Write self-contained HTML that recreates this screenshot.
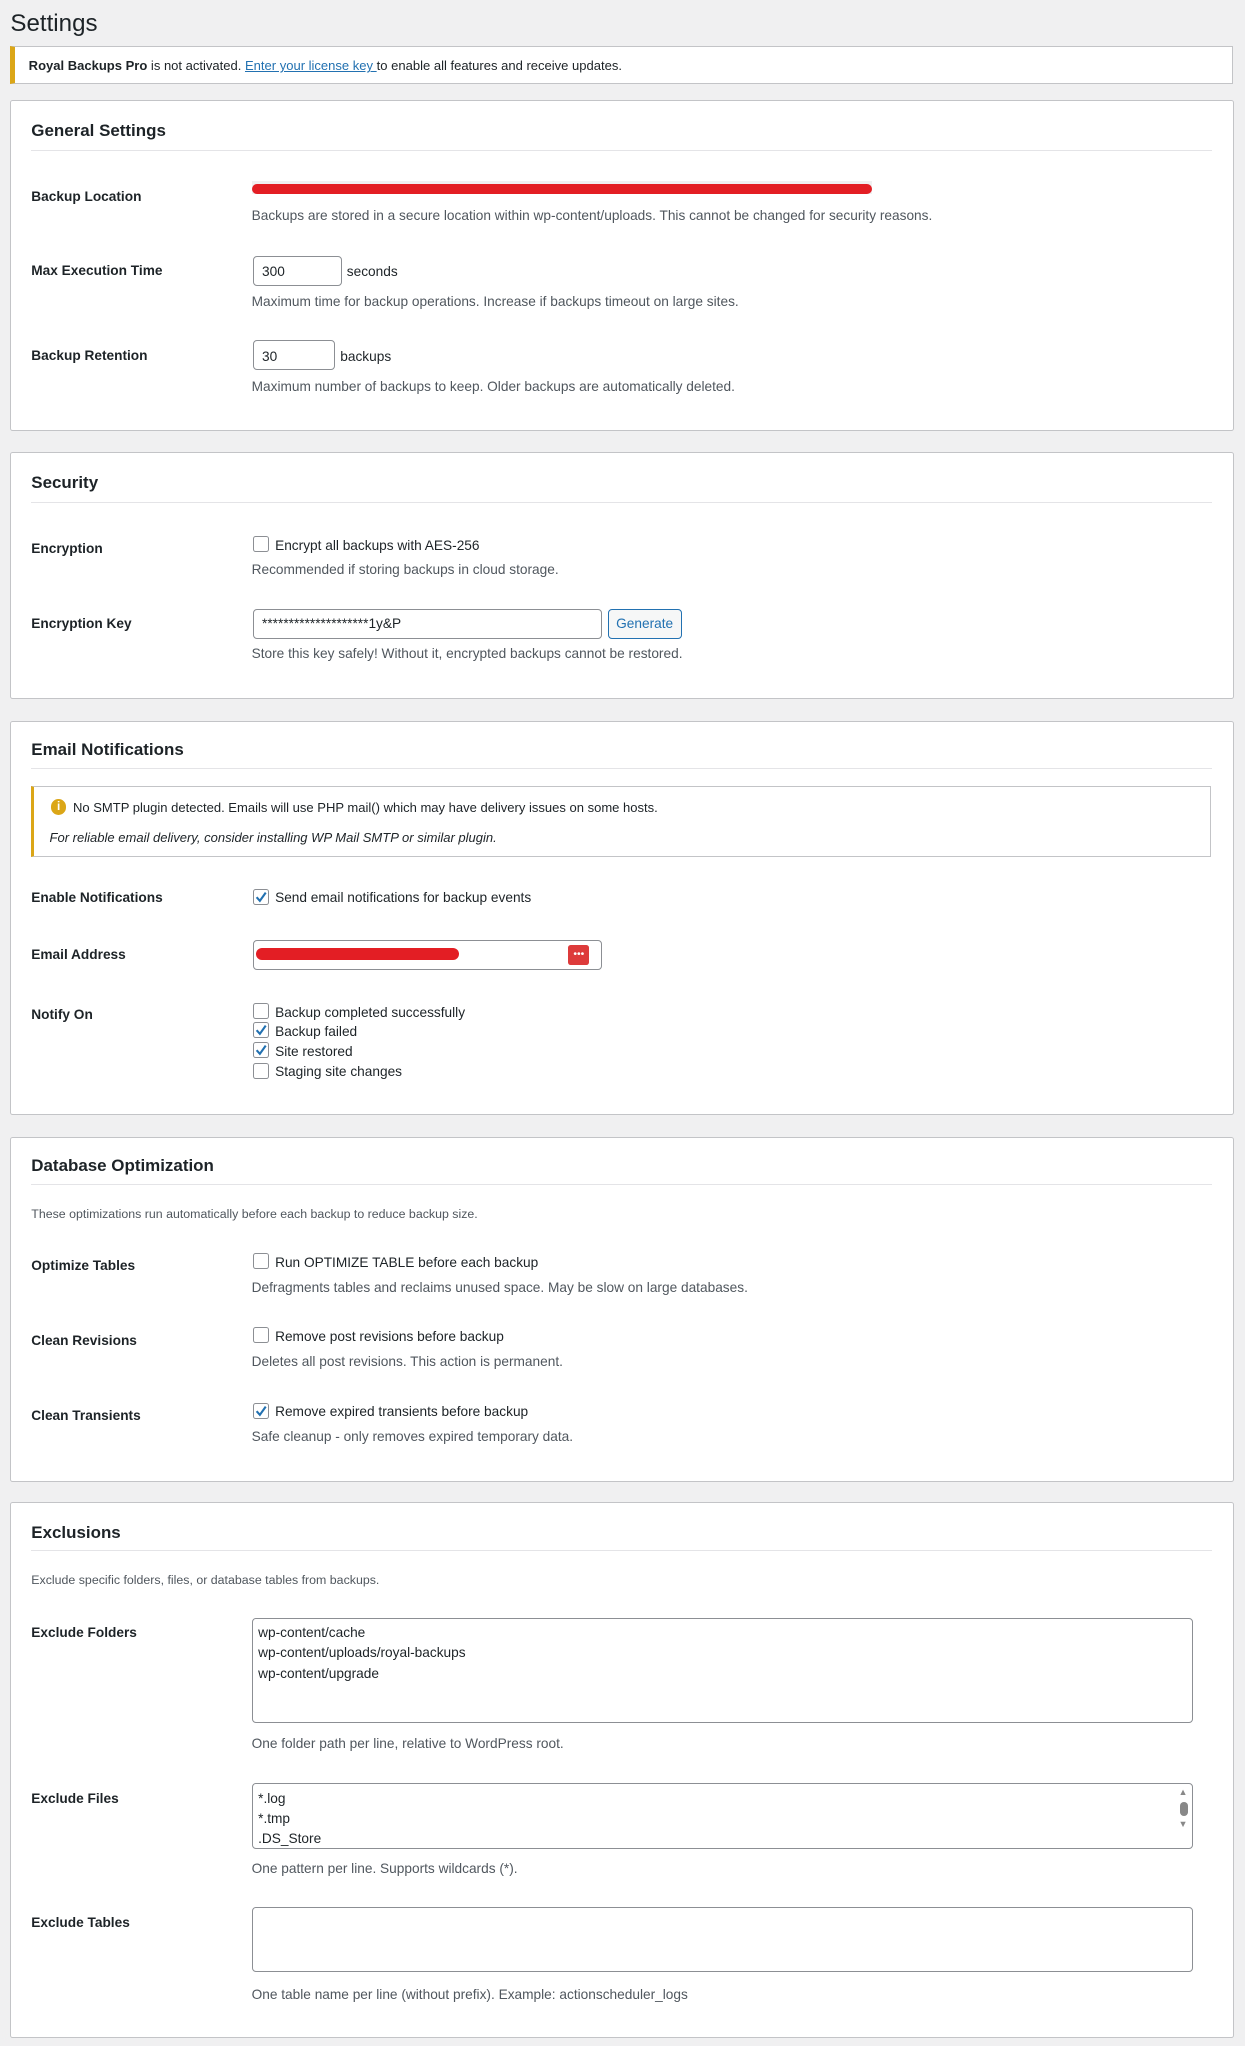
<!DOCTYPE html>
<html><head><meta charset="utf-8"><style>
html,body{margin:0;padding:0;background:#f0f0f1;}
body{width:1245px;height:2045px;overflow:hidden;}
#w{zoom:1.3037;position:relative;width:955px;height:1569px;font-family:"Liberation Sans",sans-serif;font-size:10.5px;color:#1d2327;}
#w div{position:absolute;}
.t{line-height:14px;white-space:nowrap;margin-top:1px;}
.card{background:#fff;border:1px solid #c3c4c7;border-radius:2px;left:8px;width:937px;}
.h{left:24px;font-size:13px;font-weight:bold;color:#1d2327;line-height:16px;}
.hr{left:24px;width:906px;height:1px;background:#e4e4e7;}
.lbl{left:24px;font-weight:bold;}
.d{left:193px;color:#50575e;}
.in{border:1px solid #8c8f94;border-radius:3px;background:#fff;box-sizing:border-box;}
.cb{width:11px;height:11px;border:1px solid #8c8f94;border-radius:2px;background:#fff;left:194px;}
.cb svg{position:absolute;left:0;top:0;}
.ck{left:211px;}
</style></head><body><div id="w">
<div class="t" style="left:8px;top:5px;font-size:18.5px;line-height:24px;">Settings</div>
<div style="left:8px;top:35px;height:28px;background:#fff;border:1px solid #c3c4c7;border-left:4px solid #dba617;width:933px;"></div>
<div class="t" style="left:22px;top:43px;font-size:10px;"><b style="font-weight:600">Royal Backups Pro</b> is not activated. <span style="color:#2271b1;text-decoration:underline">Enter your license key </span>to enable all features and receive updates.</div>

<!-- card 1 -->
<div class="card" style="top:77px;height:252px;"></div>
<div class="h t" style="top:92px;">General Settings</div>
<div class="hr" style="top:115px;"></div>
<div class="lbl t" style="top:143px;">Backup Location</div>
<div style="left:193px;top:139px;width:476px;height:10px;background:#f0f0f1;"></div>
<div style="left:193px;top:141px;width:476px;height:8px;background:#e31e24;border-radius:5px;"></div>
<div class="d t" style="top:158px;">Backups are stored in a secure location within wp-content/uploads. This cannot be changed for security reasons.</div>
<div class="lbl t" style="top:200px;">Max Execution Time</div>
<div class="in" style="left:194px;top:196px;width:68px;height:23px;"></div>
<div class="t" style="left:201px;top:201px;">300</div>
<div class="t" style="left:266px;top:201px;">seconds</div>
<div class="d t" style="top:224px;">Maximum time for backup operations. Increase if backups timeout on large sites.</div>
<div class="lbl t" style="top:265px;">Backup Retention</div>
<div class="in" style="left:194px;top:261px;width:63px;height:23px;"></div>
<div class="t" style="left:201px;top:266px;">30</div>
<div class="t" style="left:261px;top:266px;">backups</div>
<div class="d t" style="top:289px;">Maximum number of backups to keep. Older backups are automatically deleted.</div>

<!-- card 2 -->
<div class="card" style="top:347px;height:188px;"></div>
<div class="h t" style="top:362px;">Security</div>
<div class="hr" style="top:385px;"></div>
<div class="lbl t" style="top:413px;">Encryption</div>
<div class="cb" style="top:411px;"></div>
<div class="t ck" style="top:411px;">Encrypt all backups with AES-256</div>
<div class="d t" style="top:429px;">Recommended if storing backups in cloud storage.</div>
<div class="lbl t" style="top:471px;">Encryption Key</div>
<div class="in" style="left:194px;top:467px;width:268px;height:23px;"></div>
<div class="t" style="left:201px;top:471px;">********************1y&amp;P</div>
<div style="left:466px;top:467px;width:57px;height:23px;border:1px solid #2271b1;border-radius:3px;background:#f6f7f7;box-sizing:border-box;color:#2271b1;text-align:center;line-height:21px;">Generate</div>
<div class="d t" style="top:494px;">Store this key safely! Without it, encrypted backups cannot be restored.</div>

<!-- card 3 -->
<div class="card" style="top:553px;height:301px;"></div>
<div class="h t" style="top:567px;">Email Notifications</div>
<div class="hr" style="top:589px;"></div>
<div style="left:24px;top:603px;width:902px;height:53px;border:1px solid #c3c4c7;border-left:3px solid #dba617;background:#fff;"></div>
<div style="left:39px;top:613px;width:12px;height:12px;border-radius:50%;background:#dba617;color:#fff;font-weight:bold;font-size:9px;line-height:12px;text-align:center;">i</div>
<div class="t" style="left:56px;top:612px;font-size:10px;">No SMTP plugin detected. Emails will use PHP mail() which may have delivery issues on some hosts.</div>
<div class="t" style="left:38px;top:635px;font-size:10px;font-style:italic;">For reliable email delivery, consider installing WP Mail SMTP or similar plugin.</div>
<div class="lbl t" style="top:681px;">Enable Notifications</div>
<div class="cb" style="top:682px;"><svg width="11" height="11"><path d="M2 5.5l2.5 2.8L9 2" stroke="#2271b1" stroke-width="1.6" fill="none"/></svg></div>
<div class="t ck" style="top:681px;">Send email notifications for backup events</div>
<div class="lbl t" style="top:725px;">Email Address</div>
<div class="in" style="left:194px;top:721px;width:268px;height:23px;"></div>
<div style="left:196px;top:727px;width:156px;height:9px;background:#e31e24;border-radius:5px;"></div>
<div style="left:436px;top:725px;width:16px;height:15px;background:#dd3b3b;border-radius:2px;color:#fff;font-size:8px;line-height:15px;text-align:center;">•••</div>
<div class="lbl t" style="top:771px;">Notify On</div>
<div class="cb" style="top:769px;"></div><div class="t ck" style="top:769px;">Backup completed successfully</div>
<div class="cb" style="top:784px;"><svg width="11" height="11"><path d="M2 5.5l2.5 2.8L9 2" stroke="#2271b1" stroke-width="1.6" fill="none"/></svg></div><div class="t ck" style="top:784px;">Backup failed</div>
<div class="cb" style="top:799px;"><svg width="11" height="11"><path d="M2 5.5l2.5 2.8L9 2" stroke="#2271b1" stroke-width="1.6" fill="none"/></svg></div><div class="t ck" style="top:799px;">Site restored</div>
<div class="cb" style="top:815px;"></div><div class="t ck" style="top:814px;">Staging site changes</div>

<!-- card 4 -->
<div class="card" style="top:872px;height:263px;"></div>
<div class="h t" style="top:886px;">Database Optimization</div>
<div class="hr" style="top:908px;"></div>
<div class="t" style="left:24px;top:923px;font-size:9.5px;color:#50575e;">These optimizations run automatically before each backup to reduce backup size.</div>
<div class="lbl t" style="top:963px;">Optimize Tables</div>
<div class="cb" style="top:961px;"></div><div class="t ck" style="top:961px;">Run OPTIMIZE TABLE before each backup</div>
<div class="d t" style="top:980px;">Defragments tables and reclaims unused space. May be slow on large databases.</div>
<div class="lbl t" style="top:1021px;">Clean Revisions</div>
<div class="cb" style="top:1018px;"></div><div class="t ck" style="top:1018px;">Remove post revisions before backup</div>
<div class="d t" style="top:1037px;">Deletes all post revisions. This action is permanent.</div>
<div class="lbl t" style="top:1078px;">Clean Transients</div>
<div class="cb" style="top:1076px;"><svg width="11" height="11"><path d="M2 5.5l2.5 2.8L9 2" stroke="#2271b1" stroke-width="1.6" fill="none"/></svg></div><div class="t ck" style="top:1075px;">Remove expired transients before backup</div>
<div class="d t" style="top:1094px;">Safe cleanup - only removes expired temporary data.</div>

<!-- card 5 -->
<div class="card" style="top:1152px;height:410px;"></div>
<div class="h t" style="top:1167px;">Exclusions</div>
<div class="hr" style="top:1189px;"></div>
<div class="t" style="left:24px;top:1204px;font-size:9.5px;color:#50575e;">Exclude specific folders, files, or database tables from backups.</div>
<div class="lbl t" style="top:1245px;">Exclude Folders</div>
<div class="in" style="left:193px;top:1241px;width:722px;height:81px;"></div>
<div class="t" style="left:198px;top:1244px;line-height:15.5px;">wp-content/cache<br>wp-content/uploads/royal-backups<br>wp-content/upgrade</div>
<div class="d t" style="top:1330px;">One folder path per line, relative to WordPress root.</div>
<div class="lbl t" style="top:1372px;">Exclude Files</div>
<div class="in" style="left:193px;top:1368px;width:722px;height:50px;"></div>
<div class="t" style="left:198px;top:1371px;line-height:15.5px;">*.log<br>*.tmp<br>.DS_Store</div>
<div style="left:904px;top:1371px;color:#888;font-size:7px;line-height:9px;">▲</div>
<div style="left:905px;top:1382px;width:6px;height:11px;border-radius:3px;background:#888;"></div>
<div style="left:904px;top:1395px;color:#888;font-size:7px;line-height:9px;">▼</div>
<div class="d t" style="top:1426px;">One pattern per line. Supports wildcards (*).</div>
<div class="lbl t" style="top:1467px;">Exclude Tables</div>
<div class="in" style="left:193px;top:1463px;width:722px;height:50px;"></div>
<div class="d t" style="top:1522px;">One table name per line (without prefix). Example: actionscheduler_logs</div>
</div></body></html>
